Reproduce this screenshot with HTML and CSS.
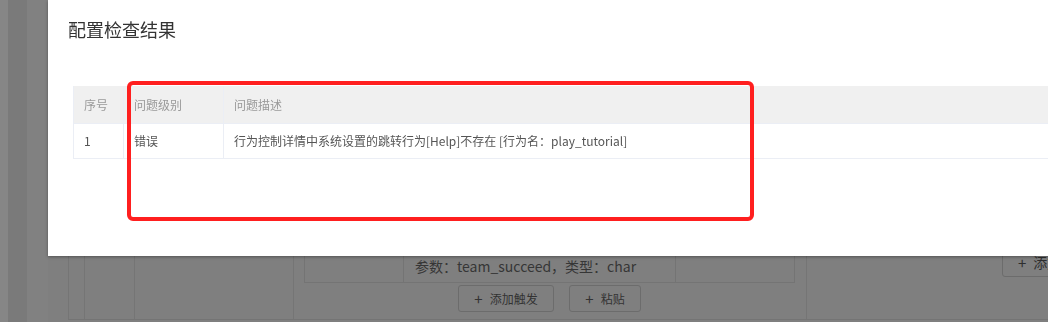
FILE: index.html
```html
<!DOCTYPE html>
<html lang="zh-CN">
<head>
    <meta charset="UTF-8">
    <meta name="viewport" content="width=device-width, initial-scale=1.0">
    <title>配置检查结果</title>
    <link rel="stylesheet" href="styles.css">
</head>
<body>
<div class="page">
    <div class="rail">
        <span class="rail-a"></span>
        <span class="rail-b"></span>
        <span class="rail-c"></span>
    </div>
    <div class="content">
        <div class="grid">
            <div class="col c1"></div>
            <div class="col c2"></div>
            <div class="col c3"></div>
            <div class="col c4">
                <div class="param-box">
                    <div class="pcell pc1"></div>
                    <div class="pcell pc2">参数：team_succeed，类型：char</div>
                    <div class="pcell pc3"></div>
                </div>
                <div class="btn-row">
                    <button class="dim-btn btn-add"><span class="plus">+</span>添加触发</button>
                    <button class="dim-btn btn-paste"><span class="plus">+</span>粘贴</button>
                </div>
            </div>
            <div class="col c5">
                <button class="dim-btn btn-side"><span class="plus">+</span>添加</button>
            </div>
        </div>
    </div>
</div>

<div class="dialog">
    <div class="dialog-title">配置检查结果</div>
    <div class="dialog-body">
        <table class="result-table">
            <thead>
                <tr>
                    <th class="col-no">序号</th>
                    <th class="col-level">问题级别</th>
                    <th>问题描述</th>
                </tr>
            </thead>
            <tbody>
                <tr>
                    <td>1</td>
                    <td>错误</td>
                    <td>行为控制详情中系统设置的跳转行为[Help]不存在 [行为名：play_tutorial]</td>
                </tr>
            </tbody>
        </table>
    </div>
    <div class="mark"></div>
</div>
</body>
</html>
```

FILE: styles.css
```css
* {
    box-sizing: border-box;
}
body {
    margin: 0;
    font-family: "Noto Sans CJK SC", "Noto Sans", sans-serif;
    background-color: #7f7f7f;
    overflow: hidden;
}
.page {
    display: flex;
    height: 322px;
}
.rail {
    display: flex;
    width: 48px;
}
.rail-a {
    width: 8px;
    background: #868686;
}
.rail-b {
    width: 19px;
    background: #7a7a7a;
}
.rail-c {
    width: 21px;
    background: #818181;
}
.content {
    flex: 1;
    padding-left: 20px;
}
.grid {
    display: grid;
    grid-template-columns: 16px 50px 159px 513px 1fr;
    height: 320px;
    border-bottom: 1px solid #747474;
}
.col {
    border-left: 1px solid #757575;
}
.c4 {
    display: flex;
    flex-direction: column;
    justify-content: flex-end;
    padding: 0 11px 7px 10px;
}
.param-box {
    display: flex;
    height: 90px;
    border: 1px solid #747474;
}
.pcell {
    display: flex;
    align-items: flex-end;
    padding-bottom: 6px;
}
.pc1 {
    width: 99px;
    border-right: 1px solid #747474;
}
.pc2 {
    width: 272px;
    padding-left: 11px;
    font-size: 14px;
    line-height: 20px;
    color: #363636;
    border-right: 1px solid #747474;
}
.pc3 {
    flex: 1;
}
.btn-row {
    display: flex;
    justify-content: center;
    gap: 15px;
    margin-top: 2px;
}
.dim-btn {
    display: flex;
    align-items: center;
    justify-content: center;
    height: 27px;
    padding: 0;
    font-family: inherit;
    font-size: 12px;
    color: #333;
    background: #7f7f7f;
    border: 1px solid #6c6c6c;
    border-radius: 3px;
}
.plus {
    font-size: 15px;
    margin-right: 7px;
}
.btn-add {
    width: 96px;
}
.btn-paste {
    width: 72px;
}
.c5 {
    display: flex;
    flex-direction: column;
    justify-content: flex-end;
    overflow: hidden;
    padding: 0 0 42px 195px;
}
.btn-side {
    width: 90px;
    height: 30px;
    justify-content: flex-start;
    padding-left: 15px;
    font-size: 14px;
    color: #2e2e2e;
}

.dialog {
    position: fixed;
    left: 48px;
    top: 0;
    width: 1100px;
    height: 256px;
    background: #fff;
    box-shadow: 0 1px 3px rgba(0, 0, 0, 0.35);
}
.dialog-title {
    padding: 17px 20px 0;
    font-size: 18px;
    line-height: 24px;
    color: #333;
}
.dialog-body {
    padding: 45px 25px 0;
}
.result-table {
    width: 100%;
    border-collapse: collapse;
    font-size: 12px;
    border-left: 1px solid #ebeef5;
}
.result-table th,
.result-table td {
    text-align: left;
    font-weight: normal;
    padding: 0 10px;
    border-bottom: 1px solid #ebeef5;
    border-right: 1px solid #ebeef5;
}
.result-table th {
    height: 37px;
    background: #f0f0f0;
    color: #999;
}
.result-table td {
    height: 35px;
    color: #555;
}
.col-no {
    width: 50px;
}
.col-level {
    width: 100px;
}
.mark {
    position: absolute;
    left: 79px;
    top: 81px;
    width: 627px;
    height: 140px;
    border: 4px solid #ff1f1f;
    border-radius: 6px;
}
```
